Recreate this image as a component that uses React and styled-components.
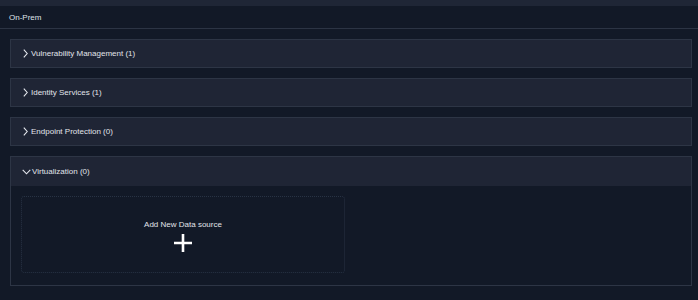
import React, { useState } from "react";
import styled, { createGlobalStyle } from "styled-components";

const GlobalStyle = createGlobalStyle`
  html, body {
    margin: 0;
    padding: 0;
    background: #121927;
    font-family: "Liberation Sans", Arial, sans-serif;
  }
`;

const Page = styled.div`
  width: 698px;
  height: 300px;
  background: #121927;
  color: #d9dde5;
  overflow: hidden;
`;

const TopStrip = styled.div`
  height: 6px;
  background: #1f2636;
`;

const SectionHeader = styled.div`
  height: 22px;
  display: flex;
  align-items: center;
  padding-left: 9px;
  font-size: 8px;
  color: #dfe2e8;
  border-bottom: 1px solid #2c3444;
`;

const List = styled.div`
  display: flex;
  flex-direction: column;
  gap: 10px;
  padding: 10px 6px 0 10px;
`;

const Item = styled.div`
  border: 1px solid #2d3545;
  background: ${({ $open }) => ($open ? "#121927" : "#1f2535")};
`;

const ItemHeader = styled.div`
  height: ${({ $open }) => ($open ? "29px" : "27px")};
  display: flex;
  align-items: center;
  gap: ${({ $open }) => ($open ? "1px" : "3px")};
  padding-left: ${({ $open }) => ($open ? "11px" : "12px")};
  background: #1f2535;
  font-size: 8px;
  color: #e1e4ea;
  cursor: pointer;
`;

const Chevron = styled.svg`
  flex: none;
  display: block;
`;

const ItemBody = styled.div`
  padding: 10px 11px 12px 10px;
`;

const AddCard = styled.div`
  width: 322px;
  height: 52px;
  padding-top: 23px;
  border: 1px dotted #283344;
  border-radius: 3px;
  display: flex;
  flex-direction: column;
  align-items: center;
  font-size: 8px;
  color: #e1e4ea;
`;

const Plus = styled.svg`
  display: block;
  margin-top: 4px;
`;

const groups = [
  { name: "Vulnerability Management", count: 1 },
  { name: "Identity Services", count: 1 },
  { name: "Endpoint Protection", count: 0 },
  { name: "Virtualization", count: 0 },
];

const Accordion = ({ name, count, open, onToggle }) => (
  <Item $open={open}>
    <ItemHeader $open={open} onClick={onToggle}>
      {open ? (
        <Chevron width="9" height="6" viewBox="0 0 9 6">
          <polyline points="0.7,0.8 4.5,4.8 8.3,0.8" fill="none" stroke="#e6e9ef" strokeWidth="1.1" />
        </Chevron>
      ) : (
        <Chevron width="5" height="9" viewBox="0 0 5 9">
          <polyline points="0.8,0.7 4.2,4.5 0.8,8.3" fill="none" stroke="#e6e9ef" strokeWidth="1.1" />
        </Chevron>
      )}
      <span>
        {name} ({count})
      </span>
    </ItemHeader>
    {open && (
      <ItemBody>
        <AddCard>
          <span>Add New Data source</span>
          <Plus width="20" height="20" viewBox="0 0 20 20">
            <path d="M10 1v18M1 10h18" stroke="#ffffff" strokeWidth="2.6" />
          </Plus>
        </AddCard>
      </ItemBody>
    )}
  </Item>
);

export default function App() {
  const [openIdx, setOpenIdx] = useState(3);
  return (
    <Page>
      <GlobalStyle />
      <TopStrip />
      <SectionHeader>On-Prem</SectionHeader>
      <List>
        {groups.map((g, i) => (
          <Accordion
            key={g.name}
            {...g}
            open={openIdx === i}
            onToggle={() => setOpenIdx(openIdx === i ? -1 : i)}
          />
        ))}
      </List>
    </Page>
  );
}
